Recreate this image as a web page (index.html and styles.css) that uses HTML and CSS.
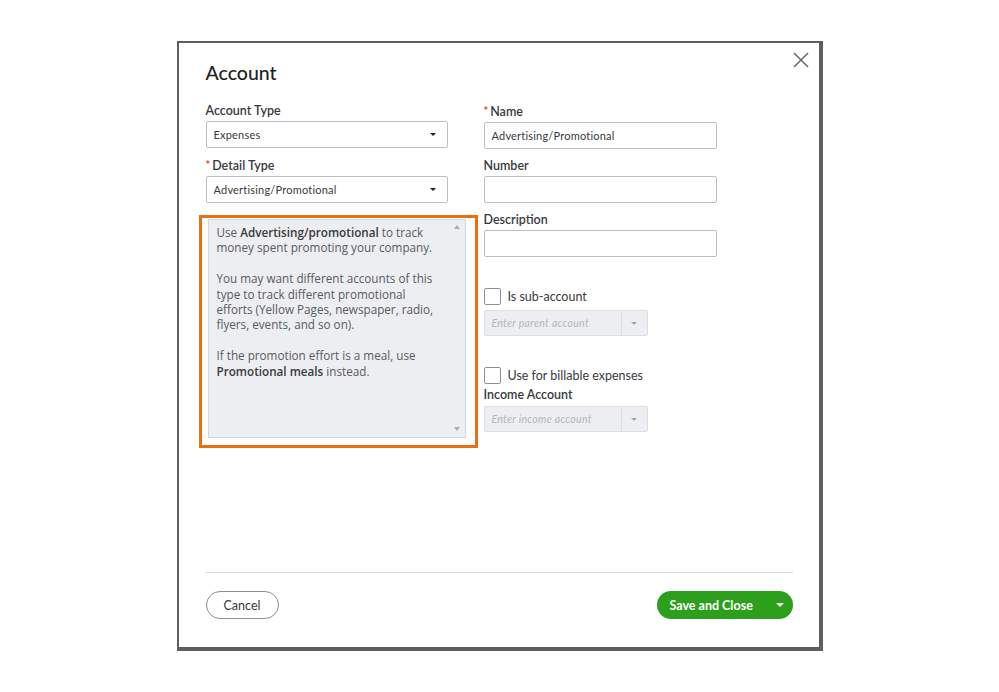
FILE: index.html
```html
<!DOCTYPE html>
<html>
<head>
<meta charset="utf-8">
<link rel="stylesheet" href="styles.css">
</head>
<body>
<div class="page">
  <div class="modal">
    <button class="close" aria-label="Close">
      <svg width="16" height="16" viewBox="0 0 16 16"><path d="M1 1 L15 15 M15 1 L1 15" stroke="#6b6c72" stroke-width="1.6" fill="none"/></svg>
    </button>
    <div class="body">
      <h1 class="title">Account</h1>
      <div class="form">
        <div class="col left">
          <div class="field">
            <label class="label">Account Type</label>
            <div class="select"><span>Expenses</span><span class="caret"></span></div>
          </div>
          <div class="field">
            <label class="label"><span class="req">*</span>Detail Type</label>
            <div class="select"><span>Advertising/Promotional</span><span class="caret"></span></div>
          </div>
          <div class="highlight">
            <div class="descbox">
              <div class="desctext">
                <p>Use <b>Advertising/promotional</b> to track money spent promoting your company.</p>
                <p>You may want different accounts of this type to track different promotional efforts (Yellow Pages, newspaper, radio, flyers, events, and so on).</p>
                <p>If the promotion effort is a meal, use <b>Promotional meals</b> instead.</p>
              </div>
              <div class="scroll">
                <span class="up"></span>
                <span class="down"></span>
              </div>
            </div>
          </div>
        </div>
        <div class="col right">
          <div class="field">
            <label class="label"><span class="req">*</span>Name</label>
            <div class="input">Advertising/Promotional</div>
          </div>
          <div class="field">
            <label class="label">Number</label>
            <div class="input"></div>
          </div>
          <div class="field">
            <label class="label">Description</label>
            <div class="input"></div>
          </div>
          <div class="check first"><span class="box"></span><span>Is sub-account</span></div>
          <div class="combo"><span class="ph">Enter parent account</span><span class="cbtn"><span class="caret light"></span></span></div>
          <div class="check second"><span class="box"></span><span>Use for billable expenses</span></div>
          <label class="label">Income Account</label>
          <div class="combo"><span class="ph">Enter income account</span><span class="cbtn"><span class="caret light"></span></span></div>
        </div>
      </div>
    </div>
    <div class="footer">
      <button class="btn cancel">Cancel</button>
      <button class="btn save"><span>Save and Close</span><span class="caret white"></span></button>
    </div>
  </div>
</div>
</body>
</html>
```

FILE: styles.css
```css
html, body {
  margin: 0;
  padding: 0;
  background: #fff;
}
body {
  font-family: "Lato", "Open Sans", sans-serif;
  color: #393a3d;
}
.page {
  display: flex;
  justify-content: center;
  padding-top: 41px;
}
.modal {
  position: relative;
  width: 646px;
  height: 610px;
  box-sizing: border-box;
  border-style: solid;
  border-color: #5e5e5e;
  border-width: 2px 4px 4px 2px;
  background: #fff;
  display: flex;
  flex-direction: column;
  padding: 18px 26px 28px 27px;
}
.close {
  position: absolute;
  top: 9px;
  right: 10px;
  width: 16px;
  height: 16px;
  padding: 0;
  border: 0;
  background: none;
  display: flex;
}
.body {
  flex: 1;
}
.title {
  margin: 0 0 17px 0;
  font-size: 19.5px;
  line-height: 24px;
  font-weight: 500;
  color: #222;
}
.form {
  display: grid;
  grid-template-columns: 242px 233px;
  column-gap: 36px;
}
.col {
  display: flex;
  flex-direction: column;
}
.field {
  display: flex;
  flex-direction: column;
  margin-bottom: 8px;
}
.label {
  font-size: 12.5px;
  line-height: 18px;
  font-weight: 600;
  color: #393a3d;
  margin-bottom: 1px;
}
.req {
  color: #d52b1e;
  font-size: 11px;
  margin-right: 2px;
  vertical-align: 1px;
}
.select, .input {
  height: 27px;
  box-sizing: border-box;
  border: 1px solid #babec5;
  border-radius: 2px;
  display: flex;
  align-items: center;
  justify-content: space-between;
  padding: 0 11px 0 7px;
  font-size: 11px;
  letter-spacing: 0.2px;
  color: #393a3d;
}
.caret {
  width: 0;
  height: 0;
  border-left: 3.5px solid transparent;
  border-right: 3.5px solid transparent;
  border-top: 3.5px solid #222;
}
.caret.light {
  border-top-color: #a3a6ab;
}
.caret.white {
  border-top-color: #fff;
  border-left-width: 4.5px;
  border-right-width: 4.5px;
  border-top-width: 4.5px;
}
.highlight {
  margin-top: 4px;
  margin-left: -7px;
  width: 279px;
  height: 233px;
  box-sizing: border-box;
  border: 3px solid #ea700f;
  padding: 1px 9px 7px 6px;
}
.descbox {
  height: 100%;
  box-sizing: border-box;
  border: 1px solid #d4d7dc;
  background: #eceef1;
  display: flex;
}
.desctext {
  flex: 1;
  padding: 5px 4px 0 8px;
  font-family: "Open Sans", "Lato", sans-serif;
  font-size: 11.7px;
  line-height: 15.4px;
  color: #5a5b60;
}
.desctext p {
  margin: 0 0 15.4px 0;
}
.desctext b {
  font-weight: 600;
  color: #393a3d;
}
.scroll {
  width: 16px;
  display: flex;
  flex-direction: column;
  justify-content: space-between;
  align-items: center;
  padding: 5px 0 6px 0;
}
.scroll .up {
  width: 0; height: 0;
  border-left: 3.5px solid transparent;
  border-right: 3.5px solid transparent;
  border-bottom: 4px solid #a8abb0;
}
.scroll .down {
  width: 0; height: 0;
  border-left: 3.5px solid transparent;
  border-right: 3.5px solid transparent;
  border-top: 4px solid #a8abb0;
}
.check {
  display: flex;
  align-items: center;
  gap: 7px;
  font-size: 12.5px;
  line-height: 17px;
  color: #393a3d;
}
.check.first { margin-top: 23px; }
.check.second { margin-top: 31px; margin-bottom: 2px; }
.check .box {
  width: 17px;
  height: 17px;
  box-sizing: border-box;
  border: 1px solid #8d9096;
  border-radius: 2px;
  background: #fff;
}
.combo {
  margin-top: 5px;
  width: 164px;
  height: 26px;
  box-sizing: border-box;
  background: #eceef1;
  border: 1px solid #dcdee2;
  border-radius: 2px;
  display: flex;
  align-items: stretch;
}
.right .label + .combo { margin-top: 1px; }
.ph {
  flex: 1;
  display: flex;
  align-items: center;
  padding-left: 7px;
  font-size: 10.5px;
  font-style: italic;
  letter-spacing: 0.3px;
  color: #b3b6bb;
}
.cbtn {
  width: 25px;
  border-left: 1px solid #dcdee2;
  display: flex;
  align-items: center;
  justify-content: center;
}
.footer {
  border-top: 1px solid #d4d7dc;
  padding-top: 18px;
  display: flex;
  justify-content: space-between;
}
.btn {
  height: 28px;
  border-radius: 14px;
  font-family: "Lato", "Open Sans", sans-serif;
  font-size: 12.5px;
  box-sizing: border-box;
  cursor: pointer;
}
.cancel {
  width: 73px;
  border: 1px solid #8d9096;
  background: #fff;
  color: #393a3d;
}
.save {
  width: 136px;
  border: 0;
  background: #2ca01c;
  color: #fff;
  font-weight: 700;
  display: flex;
  align-items: center;
  justify-content: space-between;
  padding: 0 9px 0 13px;
}
```
